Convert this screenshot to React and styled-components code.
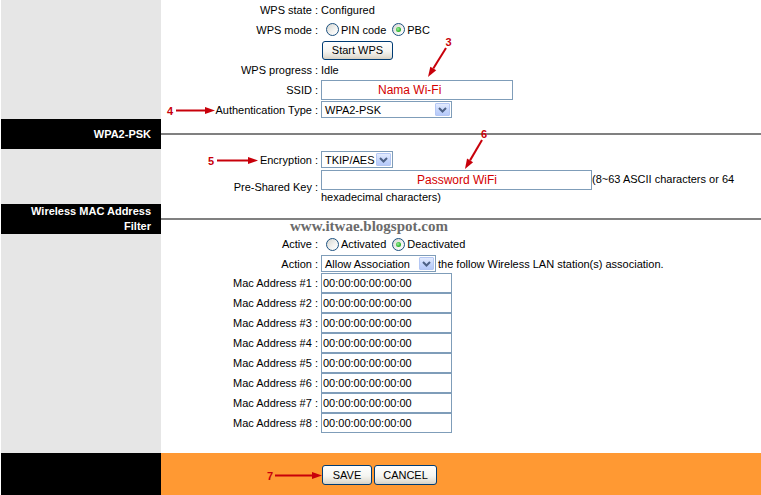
import React from "react";
import styled, { createGlobalStyle } from "styled-components";

const GlobalStyle = createGlobalStyle`
  html, body {
    margin: 0;
    padding: 0;
    background: #fff;
  }
  body {
    font-family: "Liberation Sans", Arial, sans-serif;
    font-size: 11px;
    color: #000;
  }
`;

const RED = "#c8000a";

const Page = styled.div`
  position: relative;
  width: 761px;
  height: 495px;
  overflow: hidden;
  padding-left: 1px;
  box-sizing: border-box;
  display: flex;
  flex-direction: column;
`;

const Section = styled.div`
  display: flex;
  height: ${(p) => p.$h}px;
  flex: none;
`;

const Side = styled.div`
  width: 160px;
  flex: none;
  box-sizing: border-box;
  background: ${(p) => (p.$dark ? "#000" : "#e6e6e6")};
  color: #fff;
  font-weight: bold;
  font-size: 11px;
  line-height: 15px;
  text-align: right;
  padding-right: 10px;
  display: flex;
  align-items: center;
  justify-content: flex-end;
`;

const Main = styled.div`
  flex: 1;
  display: flex;
  flex-direction: column;
  background: ${(p) => (p.$orange ? "#ff9933" : "#fff")};
  padding-top: ${(p) => p.$top || 0}px;
`;

const RuleCell = styled.div`
  flex: 1;
  display: flex;
  align-items: center;
`;

const Rule = styled.div`
  width: 100%;
  height: 2px;
  background: #808080;
`;

const FormRow = styled.div`
  display: grid;
  grid-template-columns: 157px 1fr;
  column-gap: 3px;
  align-items: center;
  height: ${(p) => p.$h || 20}px;
  flex: none;
`;

const Label = styled.div`
  text-align: right;
  white-space: nowrap;
`;

const Value = styled.div`
  display: flex;
  align-items: center;
  white-space: nowrap;
`;

const WrapValue = styled.div`
  line-height: 14px;
  white-space: nowrap;
`;

const RadioDot = styled.span`
  display: inline-block;
  position: relative;
  width: 13px;
  height: 13px;
  box-sizing: border-box;
  border-radius: 50%;
  border: 1px solid #1c5180;
  background: linear-gradient(135deg, #d6d6d0 0%, #f4f4f2 60%, #fff 100%);
  margin: 0 2px 0 ${(p) => p.$ml}px;

  &::after {
    content: "";
    display: ${(p) => (p.$checked ? "block" : "none")};
    position: absolute;
    left: 3px;
    top: 3px;
    width: 5px;
    height: 5px;
    border-radius: 50%;
    background: radial-gradient(circle at 40% 40%, #9ef09e 0%, #2fb52f 60%, #21a121 100%);
  }
`;

const Button = styled.button`
  width: ${(p) => p.$w}px;
  height: ${(p) => p.$h || 20}px;
  margin: 0 ${(p) => p.$mr || 0}px 0 1px;
  padding: 0;
  box-sizing: border-box;
  border: 1px solid #003c74;
  border-radius: 3px;
  background: linear-gradient(#ffffff 0%, #f5f5f1 55%, #e4e0d6 85%, #d6d0c3 100%);
  font: 11px "Liberation Sans", Arial, sans-serif;
  color: #000;
`;

const TextInput = styled.input`
  width: ${(p) => p.$w}px;
  height: 20px;
  box-sizing: border-box;
  margin: 0;
  border: 1px solid #7f9db9;
  padding: 0 0 0 ${(p) => p.$indent || 1}px;
  background: #fff;
  font-family: "Liberation Sans", Arial, sans-serif;
  font-size: ${(p) => (p.$red ? 12 : 11)}px;
  color: ${(p) => (p.$red ? "#d40000" : "#000")};
  outline: none;
  vertical-align: middle;
`;

const SelectBox = styled.div`
  width: ${(p) => p.$w}px;
  height: 17px;
  box-sizing: border-box;
  border: 1px solid #7f9db9;
  background: #fff;
  display: flex;
  align-items: center;
  justify-content: space-between;
  padding: 0 1px 0 3px;
  margin-right: ${(p) => p.$mr || 0}px;
`;

const SelectArrow = styled.span`
  width: 15px;
  height: 13px;
  box-sizing: border-box;
  border: 1px solid #b4c7f4;
  border-radius: 1px;
  background: linear-gradient(#e3ebfe, #c3d4fc 60%, #b6c9f9);
  display: flex;
  align-items: center;
  justify-content: center;
`;

const Watermark = styled.span`
  position: absolute;
  left: 290px;
  top: 219px;
  font-family: "Liberation Serif", "Times New Roman", serif;
  font-weight: bold;
  font-size: 15px;
  line-height: 15px;
  color: #6b6b6b;
`;

const Overlay = styled.svg`
  position: absolute;
  left: 0;
  top: 0;
  pointer-events: none;
`;

const Radio = ({ checked, ml = 5, children }) => (
  <>
    <RadioDot $checked={checked} $ml={ml} />
    <span>{children}</span>
  </>
);

const Select = ({ w, mr, children }) => (
  <SelectBox $w={w} $mr={mr}>
    <span>{children}</span>
    <SelectArrow>
      <svg width="9" height="6" viewBox="0 0 9 6">
        <path d="M1 1 L4.5 4.5 L8 1" fill="none" stroke="#4d6185" strokeWidth="2" />
      </svg>
    </SelectArrow>
  </SelectBox>
);

// red annotation arrow, head at (x2, y2)
const Arrow = ({ x1, y1, x2, y2 }) => {
  const dx = x2 - x1;
  const dy = y2 - y1;
  const len = Math.hypot(dx, dy);
  const ux = dx / len;
  const uy = dy / len;
  const bx = x2 - ux * 10;
  const by = y2 - uy * 10;
  const pts = [
    [x2, y2],
    [bx - uy * 3.5, by + ux * 3.5],
    [bx + uy * 3.5, by - ux * 3.5],
  ]
    .map((p) => p.join(","))
    .join(" ");
  return (
    <g>
      <line x1={x1} y1={y1} x2={bx} y2={by} stroke={RED} strokeWidth="2" />
      <polygon points={pts} fill={RED} />
    </g>
  );
};

const Num = ({ x, y, children }) => (
  <text
    x={x}
    y={y}
    fill={RED}
    fontSize="11"
    fontWeight="bold"
    fontFamily="Liberation Sans, Arial, sans-serif"
    textAnchor="middle"
    dominantBaseline="central"
  >
    {children}
  </text>
);

const macs = [1, 2, 3, 4, 5, 6, 7, 8];

const App = () => {
  return (
    <Page>
      <GlobalStyle />

      <Section $h={119}>
        <Side />
        <Main>
          <FormRow $h={19}>
            <Label>WPS state :</Label>
            <Value>Configured</Value>
          </FormRow>
          <FormRow $h={21}>
            <Label>WPS mode :</Label>
            <Value>
              <Radio>PIN code</Radio>
              <Radio checked ml={6}>PBC</Radio>
            </Value>
          </FormRow>
          <FormRow $h={20}>
            <Label />
            <Value>
              <Button $w={71} $h={19}>Start WPS</Button>
            </Value>
          </FormRow>
          <FormRow $h={20}>
            <Label>WPS progress :</Label>
            <Value>Idle</Value>
          </FormRow>
          <FormRow $h={20}>
            <Label>SSID :</Label>
            <Value>
              <TextInput $w={192} $red $indent={56} readOnly value="Nama Wi-Fi" />
            </Value>
          </FormRow>
          <FormRow $h={19}>
            <Label>Authentication Type :</Label>
            <Value>
              <Select w={131}>WPA2-PSK</Select>
            </Value>
          </FormRow>
        </Main>
      </Section>

      <Section $h={30}>
        <Side $dark>WPA2-PSK</Side>
        <RuleCell>
          <Rule />
        </RuleCell>
      </Section>

      <Section $h={55}>
        <Side />
        <Main>
          <FormRow $h={21}>
            <Label>Encryption :</Label>
            <Value>
              <Select w={72}>TKIP/AES</Select>
            </Value>
          </FormRow>
          <FormRow $h={34}>
            <Label>Pre-Shared Key :</Label>
            <WrapValue>
              <TextInput $w={271} $red $indent={95} readOnly value="Password WiFi" />
              (8~63 ASCII characters or 64
              <br />
              hexadecimal characters)
            </WrapValue>
          </FormRow>
        </Main>
      </Section>

      <Section $h={30}>
        <Side $dark>
          Wireless MAC Address
          <br />
          Filter
        </Side>
        <RuleCell>
          <Rule />
        </RuleCell>
      </Section>

      <Section $h={219}>
        <Side />
        <Main>
          <FormRow $h={20}>
            <Label>Active :</Label>
            <Value>
              <Radio>Activated</Radio>
              <Radio checked ml={6}>Deactivated</Radio>
            </Value>
          </FormRow>
          <FormRow $h={19}>
            <Label>Action :</Label>
            <Value>
              <Select w={115} mr={2}>Allow Association</Select>
              the follow Wireless LAN station(s) association.
            </Value>
          </FormRow>
          {macs.map((n) => (
            <FormRow $h={20} key={n}>
              <Label>Mac Address #{n} :</Label>
              <Value>
                <TextInput $w={131} readOnly value="00:00:00:00:00:00" />
              </Value>
            </FormRow>
          ))}
        </Main>
      </Section>

      <Section $h={42}>
        <Side $dark />
        <Main $orange $top={12}>
          <FormRow $h={20}>
            <Label />
            <Value>
              <Button $w={50} $mr={1}>SAVE</Button>
              <Button $w={63}>CANCEL</Button>
            </Value>
          </FormRow>
        </Main>
      </Section>

      <Watermark>www.itwae.blogspot.com</Watermark>

      <Overlay width="761" height="495" viewBox="0 0 761 495">
        <Num x={448.5} y={42}>3</Num>
        <Arrow x1={446} y1={48} x2={428} y2={77} />
        <Num x={170} y={110.5}>4</Num>
        <Arrow x1={176} y1={110.5} x2={215} y2={110.5} />
        <Num x={211} y={160.5}>5</Num>
        <Arrow x1={217} y1={160.5} x2={258} y2={160.5} />
        <Num x={484} y={134}>6</Num>
        <Arrow x1={482} y1={140} x2={465} y2={169} />
        <Num x={270} y={475.5}>7</Num>
        <Arrow x1={275} y1={475.5} x2={322} y2={475.5} />
      </Overlay>
    </Page>
  );
};

export default App;
